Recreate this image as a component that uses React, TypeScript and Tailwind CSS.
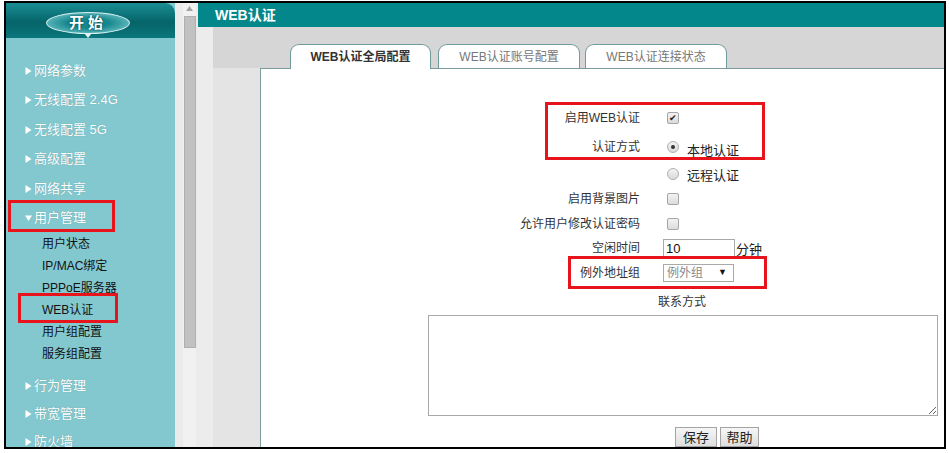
import React from "react";

const topMenu = ["网络参数", "无线配置 2.4G", "无线配置 5G", "高级配置", "网络共享"];
const subMenu = ["用户状态", "IP/MAC绑定", "PPPoE服务器", "WEB认证", "用户组配置", "服务组配置"];
const bottomMenu = ["行为管理", "带宽管理", "防火墙"];

function Arrow({ down = false }: { down?: boolean }) {
  return (
    <svg width="7" height="8" viewBox="0 0 7 8" className="mr-[2px] shrink-0">
      {down ? <polygon points="0,1.5 7,1.5 3.5,7" fill="#fff" /> : <polygon points="0.5,0 6.5,4 0.5,8" fill="#fff" />}
    </svg>
  );
}

function MenuItem({ label, down, h = "h-[29.5px]" }: { label: string; down?: boolean; h?: string }) {
  return (
    <div className={`${h} flex items-center pl-[19px] text-[13px] leading-[14px] text-white [text-shadow:0_0_1px_#5a9aa0]`}>
      <Arrow down={down} />
      <span>{label}</span>
    </div>
  );
}

function Sidebar() {
  return (
    <div className="w-[169px] shrink-0 h-full flex flex-col bg-[#84c8cf]">
      {/* 开始 */}
      <div className="h-[35px] rounded-tr-[10px] bg-[linear-gradient(180deg,#1a8e94_0%,#056469_55%,#0b777c_100%)] pl-[40px] pt-[9px] flex flex-col items-start">
        <div className="w-[84px] h-[22px] rounded-[50%] border border-[#d6f0f1] bg-[radial-gradient(ellipse_at_center,#15878d_35%,#5eb7bc_75%,#c6e9eb_100%)] flex items-center justify-center text-[15px] font-bold text-white tracking-[4px] [text-shadow:0_0_2px_#03363a]">
          开始
        </div>
        <svg width="8" height="5" viewBox="0 0 8 5" className="ml-[38px] -mt-[1px]">
          <polygon points="0,0 8,0 4,5" fill="#dff3f4" />
        </svg>
      </div>
      <div className="h-[3px] bg-[#c4e5e8]" />
      <div className="pt-[18px]">
        {topMenu.map((m) => (
          <MenuItem key={m} label={m} />
        ))}
        <MenuItem label="用户管理" down />
        <div className="pl-[36px]">
          {subMenu.map((s) => (
            <div key={s} className="h-[22px] flex items-center text-[12px] text-[#111]">
              {s}
            </div>
          ))}
        </div>
        <div className="mt-[7px]">
          {bottomMenu.map((m) => (
            <MenuItem key={m} label={m} h="h-[28px]" />
          ))}
        </div>
      </div>
    </div>
  );
}

function ScrollColumn() {
  return (
    <div className="w-[23px] shrink-0 h-full bg-[#ebebeb] pl-[8px]">
      <div className="w-[13px] h-full bg-[#f1f1f1] flex flex-col items-center">
        <svg width="7" height="5" viewBox="0 0 7 5" className="mt-[3px]">
          <polygon points="0,5 7,5 3.5,0" fill="#a3a3a3" />
        </svg>
        <div className="mt-[5px] w-[12px] h-[332px] bg-[#c1c1c1] border border-[#b0b0b0]" />
      </div>
    </div>
  );
}

function Checkbox({ checked = false }: { checked?: boolean }) {
  return (
    <span className="ml-[4px] w-[12px] h-[12px] rounded-[2px] border border-[#a6a6a6] bg-[linear-gradient(#f2f2f2,#dcdcdc)] flex items-center justify-center text-[9px] leading-none text-[#222]">
      {checked ? "✔" : ""}
    </span>
  );
}

function Radio({ checked = false }: { checked?: boolean }) {
  return (
    <span className="ml-[4px] w-[12px] h-[12px] rounded-full border border-[#b0b0b0] bg-[linear-gradient(#f4f4f4,#dadada)] flex items-center justify-center shrink-0">
      {checked && <span className="w-[4px] h-[4px] rounded-full bg-[#333]" />}
    </span>
  );
}

function Row({ h, label, children }: { h: string; label: string; children?: React.ReactNode }) {
  return (
    <div className={`flex items-center ${h}`}>
      <div className="w-[379px] text-right text-[12px] text-[#333]">{label}</div>
      <div className="pl-[23px] flex items-center">{children}</div>
    </div>
  );
}

function Panel() {
  return (
    <div className="flex-1 bg-white border-l border-t border-[#7d9c9c] pt-[35px] text-[#333]">
      <Row h="h-[28px]" label="启用WEB认证">
        <Checkbox checked />
      </Row>
      <Row h="h-[30px]" label="认证方式">
        <Radio checked />
        <span className="ml-[8px] text-[13px] text-[#222] translate-y-[4px]">本地认证</span>
      </Row>
      <Row h="h-[24px]" label="">
        <Radio />
        <span className="ml-[8px] text-[13px] text-[#222] translate-y-[2px]">远程认证</span>
      </Row>
      <Row h="h-[26px]" label="启用背景图片">
        <Checkbox />
      </Row>
      <Row h="h-[23px]" label="允许用户修改认证密码">
        <Checkbox />
      </Row>
      <Row h="h-[26px]" label="空闲时间">
        <div className="w-[72px] h-[19px] border border-[#a9a9a9] pl-[2px] text-[13px] leading-[17px] text-[#111]">10</div>
        <span className="ml-[1px] text-[13px] text-[#222] translate-y-[2px]">分钟</span>
      </Row>
      <Row h="h-[24px]" label="例外地址组">
        <div className="w-[71px] h-[18px] border border-[#a9a9a9] flex items-center justify-between pl-[3px] pr-[6px] text-[12px] text-[#888]">
          <span>例外组</span>
          <span className="text-[9px] text-[#111]">▼</span>
        </div>
      </Row>
      <div className="h-[30px] pt-[4px] flex items-center pl-[397px] text-[12px] text-[#333]">联系方式</div>
      <textarea
        readOnly
        className="block ml-[167px] w-[510px] h-[101px] border border-[#a9a9a9] outline-none"
      />
      <div className="mt-[11px] pl-[414px] flex">
        <button className="w-[42px] h-[20px] border border-[#a3a3a3] bg-[linear-gradient(#f6f6f6,#dedede)] text-[13px] text-[#222] leading-none">
          保存
        </button>
        <button className="ml-[3px] w-[39px] h-[20px] border border-[#a3a3a3] bg-[linear-gradient(#f6f6f6,#dedede)] text-[13px] text-[#222] leading-none">
          帮助
        </button>
      </div>
    </div>
  );
}

function Main() {
  return (
    <div className="flex-1 h-full flex flex-col">
      <div className="h-[24px] shrink-0 bg-[#03878b] pl-[17px] flex items-center text-[14px] font-bold text-white">
        WEB认证
      </div>
      <div className="flex-1 flex">
        <div className="w-[15px] bg-[#ececec]" />
        <div className="flex-1 flex flex-col">
          <div className="h-[41px] shrink-0 bg-[#d6d6d6] flex items-end pl-[77px]">
            <div className="relative z-10 -mb-px w-[141px] h-[25px] rounded-t-[9px] border border-b-0 border-[#6e9b9b] bg-white flex items-center justify-center text-[12px] font-bold text-[#333]">
              WEB认证全局配置
            </div>
            <div className="ml-[7px] w-[142px] h-[24px] rounded-t-[9px] border border-b-0 border-[#6e9b9b] bg-white flex items-center justify-center text-[12px] text-[#777]">
              WEB认证账号配置
            </div>
            <div className="ml-[5px] w-[142px] h-[24px] rounded-t-[9px] border border-b-0 border-[#6e9b9b] bg-white flex items-center justify-center text-[12px] text-[#777]">
              WEB认证连接状态
            </div>
          </div>
          <div className="flex-1 flex">
            <div className="w-[47px] bg-[#e4e4e4]" />
            <Panel />
          </div>
        </div>
      </div>
    </div>
  );
}

export default function App() {
  return (
    <div className="w-[949px] h-[453px] bg-white pl-[4px] pt-[1px] font-['Liberation_Sans','Noto_Sans_CJK_SC',sans-serif]">
      <div className="relative w-[942px] h-[448px] border-2 border-black flex overflow-hidden">
        <Sidebar />
        <ScrollColumn />
        <Main />
        {/* red annotation boxes */}
        <div className="absolute left-[2px] top-[197px] w-[107px] h-[32px] border-[3px] border-[#e8141b]" />
        <div className="absolute left-[12px] top-[290px] w-[100px] h-[30px] border-[3px] border-[#e8141b]" />
        <div className="absolute left-[539px] top-[99px] w-[220px] h-[58px] border-[3px] border-[#e8141b]" />
        <div className="absolute left-[562px] top-[253px] w-[199px] h-[33px] border-[3px] border-[#e8141b]" />
      </div>
    </div>
  );
}
